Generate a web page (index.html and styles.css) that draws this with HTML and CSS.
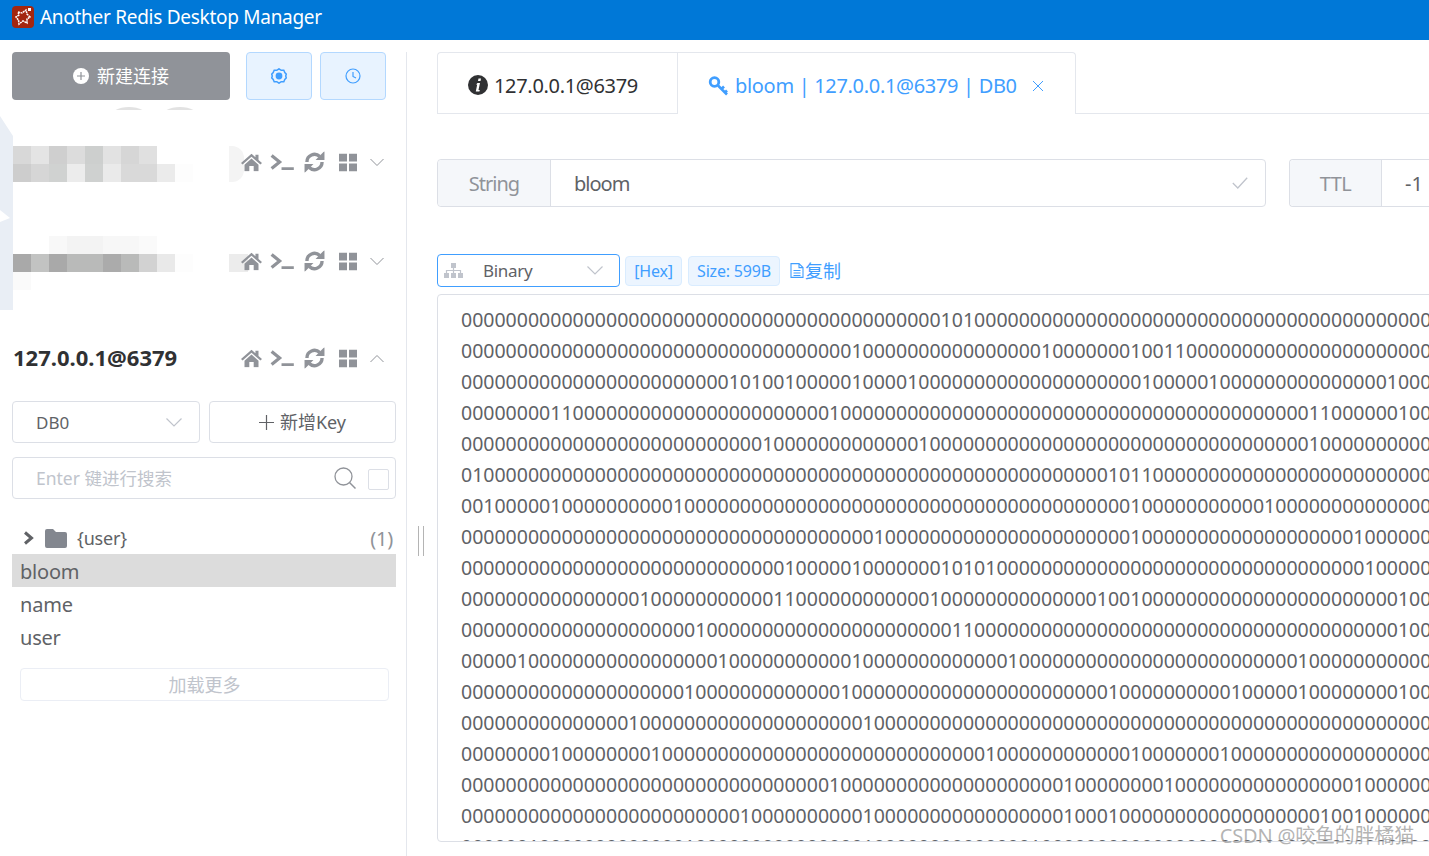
FILE: index.html
```html
<!DOCTYPE html>
<html lang="zh-CN">
<head>
    <meta charset="UTF-8">
    <title>Another Redis Desktop Manager</title>
    <link rel="stylesheet" href="styles.css">
</head>
<body>

<header class="titlebar">
    <svg class="logo" viewBox="0 0 22 22">
        <rect width="22" height="22" rx="4" fill="#a4260f"/>
        <path d="M6 6 L10 7 L14 4 L15 8 L18 11 L15 13 L15 17 L11 15 L7 18 L6.5 14 L4 11 L7 9 Z" fill="none" stroke="#fff" stroke-width="1.5" stroke-dasharray="2 .6"/>
        <rect x="16" y="2" width="3" height="3" fill="#fff"/>
    </svg>
    <span>Another Redis Desktop Manager</span>
</header>

<div class="app">
    <aside class="sidebar">
        <div class="top-actions">
            <button class="btn-new">
                <svg class="plus-circle" viewBox="0 0 16 16"><circle cx="8" cy="8" r="8" fill="#fff"/><path d="M8 4v8M4 8h8" stroke="#909399" stroke-width="1.2"/></svg>
                新建连接
            </button>
            <button class="btn-light">
                <svg class="ico16" viewBox="0 0 16 16"><path d="M8 .8l2.200 1.500 2.600-.1 1 2.400 1.500 1.600L14.700 8l.6 1.800-1.500 1.600-1 2.400-2.600-.1L8 15.200l-2.200-1.500-2.600.1-1-2.400L.7 9.800 1.300 8 .7 6.200l1.500-1.600 1-2.400 2.600.1z" fill="none" stroke="#409eff" stroke-width="1.500"/><circle cx="8" cy="8" r="3.400" fill="#409eff"/></svg>
            </button>
            <button class="btn-light">
                <svg class="ico16" viewBox="0 0 16 16"><circle cx="8" cy="8" r="7" fill="none" stroke="#409eff" stroke-width="1.200"/><path d="M8 4v4.500l3 1.500" fill="none" stroke="#409eff" stroke-width="1.200"/></svg>
            </button>
        </div>

        <div class="arcs"><i></i><i></i></div>

        <div class="conn conn-one">
            <div class="mosaic">
                <div class="cells">
                    <i style="background:#d8d8d8"></i><i style="background:#e4e4e4"></i><i style="background:#cfcfcf"></i><i style="background:#dcdcdc"></i><i style="background:#cdcfce"></i><i style="background:#e2e2e2"></i><i style="background:#d6d6d6"></i><i style="background:#e0e0e0"></i>
                </div>
                <div class="cells">
                    <i style="background:#cdcdcd"></i><i style="background:#d6d6d6"></i><i style="background:#d0d2d1"></i><i style="background:#ececec"></i><i style="background:#cfd1d0"></i><i style="background:#eaeaea"></i><i style="background:#d9d9d9"></i><i style="background:#d9d9d9"></i><i style="background:#ebebeb"></i><i style="background:#fdfdfd"></i>
                </div>
            </div>
            <span class="smudge"></span>
            <div class="conn-icons">
                <svg class="ico-home" viewBox="0 0 24 20"><path d="M12 0L0 10.500l1.800 1.900L12 3.500l10.200 8.900 1.800-1.900-4-3.500V1h-3.500v3z M4 12.500L12 5.500l8 7V20h-5.500v-6h-5v6H4z" fill="#909399"/></svg>
                <svg class="ico-term" viewBox="0 0 25 18"><path d="M1.500 2l8.500 7-8.500 7" fill="none" stroke="#909399" stroke-width="3.400"/><path d="M12 16h13" stroke="#909399" stroke-width="3"/></svg>
                <svg class="ico-sync" viewBox="0 0 20 20"><path d="M2.800 10a7.200 7.200 0 0 1 12.200-5.200M17.200 10a7.200 7.200 0 0 1-12.200 5.200" fill="none" stroke="#909399" stroke-width="3.200"/><path d="M11 8h8.500V-.5zM9 12H.5v8.500z" fill="#909399"/></svg>
                <svg class="ico-grid" viewBox="0 0 18 18"><path d="M0 0h8v8H0zM10 0h8v8h-8zM0 10h8v8H0zM10 10h8v8h-8z" fill="#909399"/></svg>
                <svg class="ico-chev" viewBox="0 0 14 8"><path d="M.5.500L7 7l6.500-6.500" fill="none" stroke="#909399"/></svg>
            </div>
        </div>

        <div class="conn conn-two">
            <div class="mosaic">
                <div class="cells">
                    <i></i><i></i><i style="background:#f8f8f8"></i><i style="background:#f3f3f3"></i><i style="background:#f3f3f3"></i><i style="background:#f7f7f7"></i><i style="background:#f7f7f7"></i><i style="background:#fafafa"></i>
                </div>
                <div class="cells">
                    <i style="background:#a9a9a9"></i><i style="background:#c2c3c2"></i><i style="background:#a9a9a9"></i><i style="background:#b9bab9"></i><i style="background:#b9bab9"></i><i style="background:#ababab"></i><i style="background:#b9bab9"></i><i style="background:#d2d2d2"></i><i style="background:#e9e9e9"></i><i style="background:#fdfdfd"></i>
                </div>
                <div class="cells">
                    <i style="background:#fafafa"></i>
                </div>
            </div>
            <span class="smudge smudge-dark"></span>
            <div class="conn-icons">
                <svg class="ico-home" viewBox="0 0 24 20"><path d="M12 0L0 10.500l1.800 1.900L12 3.500l10.200 8.900 1.800-1.900-4-3.500V1h-3.500v3z M4 12.500L12 5.500l8 7V20h-5.500v-6h-5v6H4z" fill="#909399"/></svg>
                <svg class="ico-term" viewBox="0 0 25 18"><path d="M1.500 2l8.500 7-8.500 7" fill="none" stroke="#909399" stroke-width="3.400"/><path d="M12 16h13" stroke="#909399" stroke-width="3"/></svg>
                <svg class="ico-sync" viewBox="0 0 20 20"><path d="M2.800 10a7.200 7.200 0 0 1 12.200-5.200M17.200 10a7.200 7.200 0 0 1-12.200 5.200" fill="none" stroke="#909399" stroke-width="3.200"/><path d="M11 8h8.500V-.5zM9 12H.5v8.500z" fill="#909399"/></svg>
                <svg class="ico-grid" viewBox="0 0 18 18"><path d="M0 0h8v8H0zM10 0h8v8h-8zM0 10h8v8H0zM10 10h8v8h-8z" fill="#909399"/></svg>
                <svg class="ico-chev" viewBox="0 0 14 8"><path d="M.5.500L7 7l6.500-6.500" fill="none" stroke="#909399"/></svg>
            </div>
        </div>

        <div class="conn conn-three">
            <span class="conn-name">127.0.0.1@6379</span>
            <div class="conn-icons">
                <svg class="ico-home" viewBox="0 0 24 20"><path d="M12 0L0 10.500l1.800 1.900L12 3.500l10.200 8.900 1.800-1.900-4-3.500V1h-3.500v3z M4 12.500L12 5.500l8 7V20h-5.500v-6h-5v6H4z" fill="#909399"/></svg>
                <svg class="ico-term" viewBox="0 0 25 18"><path d="M1.500 2l8.500 7-8.500 7" fill="none" stroke="#909399" stroke-width="3.400"/><path d="M12 16h13" stroke="#909399" stroke-width="3"/></svg>
                <svg class="ico-sync" viewBox="0 0 20 20"><path d="M2.800 10a7.200 7.200 0 0 1 12.200-5.200M17.200 10a7.200 7.200 0 0 1-12.200 5.200" fill="none" stroke="#909399" stroke-width="3.200"/><path d="M11 8h8.500V-.5zM9 12H.5v8.500z" fill="#909399"/></svg>
                <svg class="ico-grid" viewBox="0 0 18 18"><path d="M0 0h8v8H0zM10 0h8v8h-8zM0 10h8v8H0zM10 10h8v8h-8z" fill="#909399"/></svg>
                <svg class="ico-chev" viewBox="0 0 14 8"><path d="M.5 7.500L7 1l6.500 6.500" fill="none" stroke="#909399"/></svg>
            </div>
        </div>

        <div class="db-row">
            <div class="db-select">
                <span>DB0</span>
                <svg class="ico-select" viewBox="0 0 16 9"><path d="M.5.500L8 8l7.500-7.500" fill="none" stroke="#c0c4cc" stroke-width="1.200"/></svg>
            </div>
            <button class="btn-key">
                <svg class="ico-plus" viewBox="0 0 15 15"><path d="M7.500 0v15M0 7.500h15" stroke="#606266" stroke-width="1.200"/></svg>
                新增Key
            </button>
        </div>

        <div class="search">
            <span class="placeholder">Enter 键进行搜索</span>
            <svg class="ico-search" viewBox="0 0 22 22"><circle cx="9.500" cy="9.500" r="8.500" fill="none" stroke="#909399" stroke-width="1.300"/><path d="M15.500 15.500l6 6" stroke="#909399" stroke-width="1.500"/></svg>
            <span class="check"></span>
        </div>

        <ul class="tree">
            <li class="folder-row">
                <svg class="ico-caret" viewBox="0 0 11 14"><path d="M2 1.500L8.500 7 2 12.500" fill="none" stroke="#606266" stroke-width="3"/></svg>
                <svg class="ico-folder" viewBox="0 0 22 19"><path d="M2 0h6l3 3h9a2 2 0 0 1 2 2v12a2 2 0 0 1-2 2H2a2 2 0 0 1-2-2V2a2 2 0 0 1 2-2z" fill="#83878f"/></svg>
                <span class="folder-name">{user}</span>
                <span class="count">(1)</span>
            </li>
            <li class="active">bloom</li>
            <li>name</li>
            <li>user</li>
        </ul>
        <button class="load-more">加载更多</button>
    </aside>

    <div class="resizer"><i></i><i></i></div>

    <main class="content">
        <div class="tabs">
            <div class="tab">
                <svg class="ico-info" viewBox="0 0 20 20"><circle cx="10" cy="10" r="10" fill="#303133"/><path d="M10.500 3.500h2.500l-.5 2.500H10zM9.500 8H12l-1.500 7h1.300l-.4 1.500H7.800l1.400-7H8z" fill="#fff"/></svg>
                <span>127.0.0.1@6379</span>
            </div>
            <div class="tab tab-active">
                <svg class="ico-key" viewBox="0 0 20 20"><circle cx="6" cy="6" r="4.300" fill="none" stroke="#409eff" stroke-width="2.800"/><path d="M9.500 9.500l9 9M13 13l2.500-2.500M16.500 16.500l2-2" fill="none" stroke="#409eff" stroke-width="2.600"/></svg>
                <span>bloom | 127.0.0.1@6379 | DB0</span>
                <svg class="ico-close" viewBox="0 0 12 12"><path d="M1 1l10 10M11 1L1 11" stroke="#409eff" stroke-width="1"/></svg>
            </div>
            <div class="tab-rest"></div>
        </div>

        <div class="key-row">
            <div class="key-name">
                <span class="prepend prepend-type">String</span>
                <span class="key-value">bloom</span>
                <svg class="ico-ok" viewBox="0 0 16 12"><path d="M.8 6l5 5L15.200.800" fill="none" stroke="#c0c4cc" stroke-width="1.300"/></svg>
            </div>
            <div class="key-ttl">
                <span class="prepend prepend-ttl">TTL</span>
                <span class="ttl-value">-1</span>
            </div>
        </div>

        <div class="view-row">
            <div class="view-select">
                <svg class="ico-tree" viewBox="0 0 19 15"><path d="M7 0h5v5H7zM0 10h5v5H0zM7 10h5v5H7zM14 10h5v5h-5z" fill="#c0c4cc"/><path d="M2.500 10V7.500h14V10M9.500 5v5" fill="none" stroke="#c0c4cc" stroke-width="1.200"/></svg>
                <span>Binary</span>
                <svg class="ico-select" viewBox="0 0 16 9"><path d="M.5.500L8 8l7.500-7.500" fill="none" stroke="#c0c4cc" stroke-width="1.200"/></svg>
            </div>
            <span class="tag tag-hex">[Hex]</span>
            <span class="tag tag-size">Size: 599B</span>
            <span class="copy">
                <svg class="ico-doc" viewBox="0 0 14 15"><path d="M1 .6h8l4 4v9.800H1z M9 .6v4h4 M3.500 7.500h7M3.500 10h7M3.500 12.500h7" fill="none" stroke="#409eff" stroke-width="1.100"/></svg>复制
            </span>
        </div>

        <div class="binary"><pre>00000000000000000000000000000000000000000001010000000000000000000000000000000000000000000000
000000000000000000000000000000000001000000000000000010000000100110000000000000000000000100000
000000000000000000000000101001000001000010000000000000000000010000010000000000000001000000
000000001100000000000000000000000100000000000000000000000000000000000000000011000000100000000
000000000000000000000000000100000000000001000000000000000000000000000000000010000000000000000
010000000000000000000000000000000000000000000000000000000010110000000000000000000000000000
001000001000000000010000000000000000000000000000000000000000100000000000100000000000000000
000000000000000000000000000000000000010000000000000000000000100000000000000000001000000000
000000000000000000000000000001000001000000010101000000000000000000000000000000000100000000
000000000000000010000000000011000000000000100000000000000100100000000000000000000000100000
000000000000000000000100000000000000000000001100000000000000000000000000000000000000100000000
000001000000000000000001000000000001000000000000010000000000000000000000000100000000000000
000000000000000000001000000000000010000000000000000000000010000000000100000100000000100000
000000000000000100000000000000000000100000000000000000000000000000000000000000000000000000
000000001000000001000000000000000000000000000001000000000000100000001000000000000000000000
000000000000000000000000000000000100000000000000000000100000000100000000000000001000000000
000000000000000000000000010000000000100000000000000000100010000000000000000001001000000000000
000000100000000000001000000000000000100000000000000100000000000000000000000000000000000000</pre></div>
        <div class="watermark">CSDN @咬鱼的胖橘猫</div>
    </main>
</div>

</body>
</html>
```

FILE: styles.css
```css
* {
    box-sizing: border-box;
}
html, body {
    height: 100%;
    margin: 0;
    overflow: hidden;
}
body {
    font-family: "Noto Sans", "Noto Sans CJK SC", sans-serif;
    background-color: #fff;
    color: #606266;
    display: flex;
    flex-direction: column;
}
button {
    font-family: inherit;
    cursor: pointer;
}
svg {
    display: block;
    flex: none;
    overflow: hidden;
}

/* title bar */
.titlebar {
    height: 40px;
    flex: none;
    background-color: #0078d7;
    color: #fff;
    font-size: 19px;
    letter-spacing: -0.28px;
    display: flex;
    align-items: center;
    padding-left: 12px;
    gap: 6px;
    padding-bottom: 6px;
}
.logo {
    width: 22px;
    height: 22px;
}

.app {
    flex: 1;
    display: flex;
    min-height: 0;
    padding-top: 12px;
}

/* sidebar */
.sidebar {
    width: 407px;
    flex: none;
    border-right: 1px solid #e4e7ed;
    padding: 0 10px 0 12px;
    position: relative;
}
.sidebar::before {
    content: "";
    position: absolute;
    left: 0;
    top: 64px;
    width: 13px;
    height: 194px;
    background: #e9eef5;
    clip-path: polygon(0 0, 100% 20px, 100% 100%, 0 100%, 0 106px, 10px 102px, 0 94px);
}
.top-actions {
    display: flex;
    height: 48px;
}
.btn-new {
    width: 218px;
    background-color: #909399;
    border: none;
    border-radius: 4px;
    color: #fff;
    font-size: 18px;
    display: flex;
    align-items: center;
    justify-content: center;
    gap: 8px;
    margin-right: 16px;
    padding: 0 0 2px;
}
.plus-circle {
    width: 16px;
    height: 16px;
    margin-top: 2px;
}
.btn-light {
    width: 66px;
    margin-right: 8px;
    background-color: #e8f3ff;
    border: 1px solid #b3d8ff;
    border-radius: 4px;
    display: flex;
    align-items: center;
    justify-content: center;
    padding: 0;
}
.ico16 {
    width: 16px;
    height: 16px;
}
.arcs {
    height: 3px;
    margin-top: 7px;
    overflow: hidden;
    display: flex;
    padding-left: 98px;
    gap: 13px;
}
.arcs i {
    display: block;
    width: 38px;
    height: 20px;
    border-radius: 50%;
    background: #e2e2e2;
}

.conn {
    display: flex;
    align-items: center;
    position: relative;
}
.conn-one {
    height: 36px;
    margin: 36px 0 0 1px;
}
.conn-two {
    height: 54px;
    margin: 54px 0 0 1px;
}
.conn-three {
    height: 30px;
    margin: 53px 0 0 1px;
}
.mosaic {
    width: 216px;
}
.cells {
    display: flex;
    height: 18px;
}
.cells i {
    display: block;
    width: 18px;
    height: 18px;
}
.smudge {
    width: 15px;
    height: 36px;
    background: #f4f4f4;
    border-radius: 0 12px 12px 0;
}
.smudge-dark {
    width: 19px;
    height: 18px;
    background: #ececec;
    border-radius: 0;
}
.conn-icons {
    position: absolute;
    left: 228px;
    top: 50%;
    transform: translateY(-50%);
    display: flex;
    align-items: center;
}
.conn-one .conn-icons,
.conn-two .conn-icons {
    margin-top: -2px;
}
.ico-home {
    width: 21px;
    height: 18px;
}
.ico-term {
    width: 24px;
    height: 17px;
    margin-left: 8px;
}
.ico-sync {
    width: 21px;
    height: 21px;
    margin-left: 10px;
}
.ico-grid {
    width: 18px;
    height: 18px;
    margin-left: 14px;
}
.ico-chev {
    width: 14px;
    height: 8px;
    margin-left: 13px;
}
.conn-name {
    font-size: 22px;
    font-weight: 700;
    color: #303133;
    margin-top: -2px;
}

.db-row {
    display: flex;
    gap: 9px;
    margin-top: 28px;
}
.db-select {
    width: 188px;
    height: 42px;
    border: 1px solid #dcdfe6;
    border-radius: 4px;
    font-size: 17px;
    display: flex;
    align-items: center;
    justify-content: space-between;
    padding: 0 17px 0 23px;
}
.ico-select {
    width: 16px;
    height: 9px;
}
.btn-key {
    width: 187px;
    height: 42px;
    background: #fff;
    border: 1px solid #dcdfe6;
    border-radius: 4px;
    color: #606266;
    font-size: 18px;
    display: flex;
    align-items: center;
    justify-content: center;
    gap: 6px;
    padding: 0 0 2px;
}
.ico-plus {
    width: 15px;
    height: 15px;
    margin-top: 2px;
}
.search {
    height: 42px;
    margin-top: 14px;
    border: 1px solid #dcdfe6;
    border-radius: 4px;
    display: flex;
    align-items: center;
    padding: 0 6px 0 23px;
    font-size: 17.5px;
    color: #c0c4cc;
}
.placeholder {
    flex: 1;
    margin-top: -2px;
}
.ico-search {
    width: 22px;
    height: 22px;
    margin-right: 12px;
}
.check {
    width: 21px;
    height: 21px;
    border: 1px solid #dcdfe6;
    border-radius: 2px;
    margin-top: 2px;
}

.tree {
    list-style: none;
    margin: 23px 0 0;
    padding: 0;
    font-size: 20px;
    letter-spacing: -0.2px;
    color: #606266;
}
.tree li {
    height: 33px;
    line-height: 35px;
    padding-left: 8px;
}
.tree li.active {
    background-color: #dcdcdc;
}
.tree .folder-row {
    display: flex;
    align-items: center;
    padding: 0 3px 0 11px;
    height: 32px;
    font-size: 18px;
}
.ico-caret {
    width: 11px;
    height: 14px;
}
.ico-folder {
    width: 22px;
    height: 19px;
    margin-left: 11px;
}
.folder-name {
    margin-left: 10px;
    flex: 1;
}
.count {
    color: #909399;
    font-size: 20px;
}
.load-more {
    display: block;
    width: 369px;
    height: 33px;
    margin: 15px 0 0 8px;
    background: #fff;
    border: 1px solid #ebeef5;
    border-radius: 4px;
    color: #c0c4cc;
    font-size: 18px;
    padding: 0 0 2px;
}

.resizer {
    width: 30px;
    flex: none;
    display: flex;
    justify-content: center;
    align-items: flex-start;
    gap: 4px;
    padding: 474px 3px 0 0;
}
.resizer i {
    display: block;
    width: 1px;
    height: 30px;
    background: #b4b4b4;
}

/* right side */
.content {
    flex: 1;
    min-width: 0;
    position: relative;
    overflow: hidden;
}
.tabs {
    display: flex;
    height: 62px;
}
.tab {
    width: 240px;
    border: 1px solid #e4e7ed;
    border-right: none;
    border-radius: 4px 0 0 0;
    color: #303133;
    font-size: 20px;
    letter-spacing: -0.32px;
    display: flex;
    align-items: center;
    gap: 6px;
    padding: 4px 0 0 30px;
}
.tab-active {
    width: 399px;
    color: #409eff;
    border-right: 1px solid #e4e7ed;
    border-bottom: none;
    border-radius: 0 4px 0 0;
    padding-left: 30px;
}
.tab-rest {
    flex: 1;
    border-bottom: 1px solid #e4e7ed;
}
.ico-info {
    width: 20px;
    height: 20px;
}
.ico-key {
    width: 21px;
    height: 20px;
}
.ico-close {
    width: 12px;
    height: 12px;
    margin-left: 9px;
}
.key-row {
    display: flex;
    margin-top: 45px;
    height: 48px;
    font-size: 20px;
}
.key-name {
    width: 829px;
    flex: none;
    display: flex;
    align-items: center;
    border: 1px solid #dcdfe6;
    border-radius: 4px;
    padding-right: 17px;
}
.prepend {
    height: 100%;
    display: flex;
    align-items: center;
    justify-content: center;
    background-color: #f5f7fa;
    color: #909399;
    border-right: 1px solid #dcdfe6;
    border-radius: 4px 0 0 4px;
    flex: none;
}
.prepend-type {
    width: 113px;
    letter-spacing: -1px;
}
.prepend-ttl {
    width: 92px;
    letter-spacing: -0.5px;
}
.key-value {
    flex: 1;
    padding-left: 23px;
    letter-spacing: -1px;
}
.ico-ok {
    width: 16px;
    height: 12px;
}
.key-ttl {
    margin-left: 23px;
    flex: 1;
    display: flex;
    align-items: center;
    border: 1px solid #dcdfe6;
    border-right: none;
    border-radius: 4px 0 0 4px;
}
.ttl-value {
    padding-left: 23px;
}

.view-row {
    display: flex;
    align-items: center;
    height: 33px;
    margin-top: 47px;
    font-size: 16px;
}
.view-select {
    width: 183px;
    height: 33px;
    border: 1px solid #409eff;
    border-radius: 4px;
    display: flex;
    align-items: center;
    padding: 0 16px 0 6px;
    font-size: 17px;
    letter-spacing: -0.3px;
}
.view-select span {
    flex: 1;
    padding-left: 20px;
}
.ico-tree {
    width: 19px;
    height: 15px;
}
.tag {
    height: 30px;
    display: flex;
    align-items: center;
    justify-content: center;
    background-color: #ecf5ff;
    border: 1px solid #d9ecff;
    border-radius: 4px;
    color: #409eff;
    letter-spacing: -0.2px;
}
.tag-hex {
    width: 57px;
    margin-left: 5px;
}
.tag-size {
    width: 92px;
    margin-left: 6px;
}
.copy {
    display: flex;
    align-items: center;
    gap: 1px;
    margin-left: 10px;
    color: #409eff;
    font-size: 18px;
    padding-bottom: 2px;
}
.ico-doc {
    width: 14px;
    height: 15px;
    margin-top: 2px;
}

.binary {
    width: 1100px;
    height: 548px;
    margin-top: 7px;
    padding: 9px 0 0 23px;
    border: 1px solid #dcdfe6;
    border-radius: 4px;
    overflow: hidden;
}
.binary pre {
    margin: 0;
    height: 539px;
    overflow: hidden;
    font-family: "Noto Sans", sans-serif;
    font-size: 19.5px;
    line-height: 31px;
    color: #606266;
}
.watermark {
    position: absolute;
    right: 15px;
    top: 768px;
    font-size: 20px;
    letter-spacing: -0.2px;
    color: rgba(130, 130, 130, 0.6);
    white-space: nowrap;
}
```
